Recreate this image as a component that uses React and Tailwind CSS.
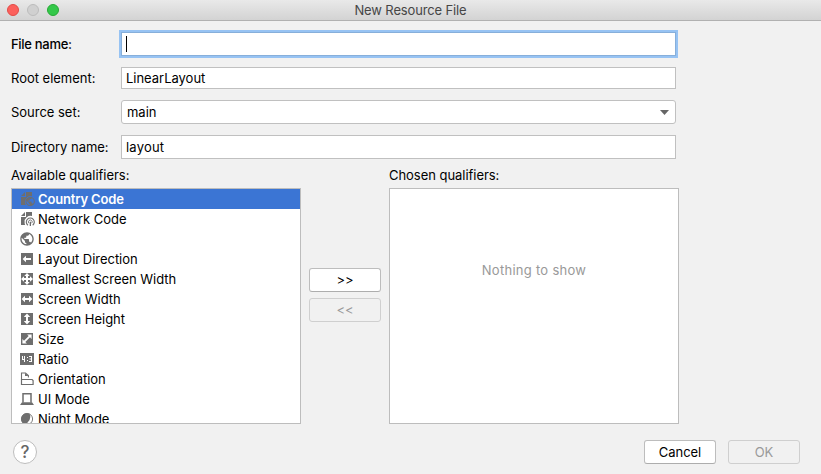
import React from "react";

const GRAY = "#6e6e6e";

function Icon({ children }) {
  return (
    <svg width="16" height="16" viewBox="0 0 16 16" fill={GRAY} className="block shrink-0">
      {children}
    </svg>
  );
}

function Square({ children }) {
  return (
    <Icon>
      <rect x="2" y="2" width="12" height="12" />
      <g fill="#fff">{children}</g>
    </Icon>
  );
}

const globe =
  "M12 2C6.48 2 2 6.48 2 12s4.48 10 10 10 10-4.48 10-10S17.52 2 12 2zm-1 17.93c-3.95-.49-7-3.85-7-7.93 0-.62.08-1.21.21-1.79L9 15v1c0 1.1.9 2 2 2v1.93zm6.9-2.54c-.26-.81-1-1.39-1.9-1.39h-1v-3c0-.55-.45-1-1-1H8v-2h2c.55 0 1-.45 1-1V7h2c1.1 0 2-.9 2-2v-.41c2.93 1.19 5 4.06 5 7.41 0 2.08-.8 3.97-2.1 5.39z";

const qualifiers = [
  {
    name: "Country Code",
    icon: (
      <Icon>
        <path d="M7 1h6v4.2a5.6 5.6 0 0 0-7 5.6q0 1.8.8 3.2H2V6h5z" />
        <path d="M2 5 6 1v4z" />
        <path transform="translate(5.7 5) scale(.46)" d={globe} />
      </Icon>
    ),
  },
  {
    name: "Network Code",
    icon: (
      <Icon>
        <path d="M7 1h6v4a6 6 0 0 0-7.4 6.3q0 1.5.5 2.7H2V6h5z" />
        <path d="M2 5 6 1v4z" />
        <path d="M8.9 14.2a4 4 0 1 1 4.8 0" fill="none" stroke={GRAY} strokeWidth="1.1" />
        <path d="M9.9 12.2a1.9 1.9 0 1 1 2.8 0" fill="none" stroke={GRAY} strokeWidth=".9" />
        <path d="M10.7 10.7h1.3V15h-1.3z" />
      </Icon>
    ),
  },
  {
    name: "Locale",
    icon: (
      <Icon>
        <path transform="translate(-.1 -.1) scale(.675)" d={globe} />
      </Icon>
    ),
  },
  {
    name: "Layout Direction",
    icon: (
      <Square>
        <path d="M3.6 8 7 4.8V7h5v2H7v2.2z" />
      </Square>
    ),
  },
  {
    name: "Smallest Screen Width",
    icon: (
      <Square>
        <path d="M8 2l2.7 3H9v2h2V5.3L14 8l-3 2.7V9H9v2h1.7L8 14l-2.7-3H7V9H5v1.7L2 8l3-2.7V7h2V5H5.3z" />
      </Square>
    ),
  },
  {
    name: "Screen Width",
    icon: (
      <Square>
        <path d="M2.6 8 6 4.8V7h4V4.8L13.4 8 10 11.2V9H6v2.2z" />
      </Square>
    ),
  },
  {
    name: "Screen Height",
    icon: (
      <Square>
        <path d="M8 2.6 11.2 6H9v4h2.2L8 13.4 4.8 10H7V6H4.8z" />
      </Square>
    ),
  },
  {
    name: "Size",
    icon: (
      <Square>
        <path d="M12.6 3.4v4.5L11 6.3 6.3 11l1.6 1.6H3.4V8.1L5 9.7 9.7 5 8.1 3.4z" />
      </Square>
    ),
  },
  {
    name: "Ratio",
    icon: (
      <Icon>
        <rect x="1" y="2" width="14" height="12" />
        <g fill="#fff">
          <path d="M3 5h1v3h1V5h1v6H5V9H3z" />
          <path d="M8 6h1v1H8zM8 9h1v1H8z" />
          <path d="M10 5h3v6h-3v-1h2V8.5h-1.5v-1H12V6h-2z" />
        </g>
      </Icon>
    ),
  },
  {
    name: "Orientation",
    icon: (
      <Icon>
        <path d="M2.5 8V2h4l2.9 2.6V6.5" fill="none" stroke={GRAY} strokeWidth="1.1" />
        <path d="M6 2v3h3.8z" />
        <path
          d="M2.5 8.5h10.6l1 1v4H2.5z"
          fill="none"
          stroke={GRAY}
          strokeWidth="1.2"
        />
      </Icon>
    ),
  },
  {
    name: "UI Mode",
    icon: (
      <Icon>
        <path d="M4 11.6V2.7h8v8.9" fill="none" stroke={GRAY} strokeWidth="1.5" />
        <path d="M3 11.2h10l2 2.8H1z" />
      </Icon>
    ),
  },
  {
    name: "Night Mode",
    icon: (
      <Icon>
        <circle cx="8" cy="8" r="5.6" fill="#fff" stroke={GRAY} strokeWidth=".9" />
        <path d="M2.2 8A5.8 5.8 0 0 1 10.6 2.8Q13.2 9 6.2 13.5A5.8 5.8 0 0 1 2.2 8z" />
      </Icon>
    ),
  },
];

function Label({ children, className = "" }) {
  return <div className={`w-[110px] shrink-0 ${className}`}>{children}</div>;
}

function Button({ children, disabled = false }) {
  return (
    <button
      disabled={disabled}
      className={`flex h-6 w-[72px] items-center justify-center rounded-[3px] border ${
        disabled
          ? "border-[#cfcfcf] bg-[#f1f1f1] text-[#9a9a9a]"
          : "border-[#bdbdbd] border-b-[#adadad] bg-white text-black"
      }`}
    >
      {children}
    </button>
  );
}

export default function App() {
  return (
    <div className="flex h-[474px] w-[821px] flex-col overflow-hidden bg-[#f1f1f1] font-['Inter','Liberation_Sans',sans-serif] text-[13px] leading-5 tracking-[-0.02px] text-black">
      <header className="flex h-[21px] shrink-0 items-center border-b border-[#b1b1b1] bg-linear-to-b from-[#e9e9e9] to-[#d3d3d3] px-[7px]">
        <div className="flex w-[100px] gap-2">
          <span className="size-3 rounded-full border border-[#e24b47] bg-[#fc605c]" />
          <span className="size-3 rounded-full border border-[#bcbcbc] bg-[#d0d0d0]" />
          <span className="size-3 rounded-full border border-[#27aa35] bg-[#34c84a]" />
        </div>
        <h1 className="flex-1 text-center tracking-[-0.14px] text-[#464646]">New Resource File</h1>
        <div className="w-[100px]" />
      </header>

      <main className="flex flex-col pl-[11px] pt-[11px]">
        <div className="flex h-6 items-center">
          <Label className="font-medium tracking-[-0.3px]">File name:</Label>
          <div className="flex h-6 w-[555px] items-center border border-[#87afda] bg-white pl-1 ring-2 ring-[#97c3f3]">
            <span className="h-4 w-px bg-black" />
          </div>
        </div>
        <div className="mt-[11px] flex h-[22px] items-center">
          <Label>Root element:</Label>
          <div className="flex h-[22px] w-[555px] items-center border border-[#c0c0c0] bg-white pl-1">
            LinearLayout
          </div>
        </div>
        <div className="mt-[11px] flex h-6 items-center">
          <Label>Source set:</Label>
          <div className="flex h-6 w-[555px] items-center justify-between rounded-[3px] border border-[#c0c0c0] bg-white pl-[5px] pr-[6px]">
            main
            <svg width="9" height="5" viewBox="0 0 9 5" fill="#666">
              <path d="M0 0h9L4.5 5z" />
            </svg>
          </div>
        </div>
        <div className="mt-[11px] flex h-6 items-center">
          <Label>Directory name:</Label>
          <div className="flex h-6 w-[555px] items-center border border-[#c0c0c0] bg-white pl-1 tracking-[0.2px]">
            layout
          </div>
        </div>

        <div className="mt-[6px] flex">
          <section className="w-[290px]">
            <h2 className="h-[23px]">Available qualifiers:</h2>
            <ul className="h-[236px] overflow-hidden border border-[#bdbdbd] bg-white">
              {qualifiers.map((q, i) => (
                <li
                  key={q.name}
                  className={`flex h-5 items-center gap-[3px] pl-[7px] ${
                    i === 0 ? "bg-[#3b75d4] font-semibold tracking-[-0.15px] text-white" : ""
                  }`}
                >
                  {q.icon}
                  <span>{q.name}</span>
                </li>
              ))}
            </ul>
          </section>
          <div className="flex w-[88px] flex-col items-center gap-[6px] pt-[103px]">
            <Button>&gt;&gt;</Button>
            <Button disabled>&lt;&lt;</Button>
          </div>
          <section className="w-[290px]">
            <h2 className="h-[23px] tracking-[-0.04px]">Chosen qualifiers:</h2>
            <div className="h-[236px] border border-[#bdbdbd] bg-white pt-[71px] text-center tracking-[0.28px] text-[#999]">
              Nothing to show
            </div>
          </section>
        </div>
      </main>

      <footer className="mt-4 flex h-6 items-center justify-between pl-[13px] pr-[21px]">
        <button className="flex size-6 items-center justify-center rounded-full border border-[#bdbdbd] bg-white text-[17px] font-medium text-[#666]">
          ?
        </button>
        <div className="flex gap-3">
          <Button>Cancel</Button>
          <Button disabled>OK</Button>
        </div>
      </footer>
    </div>
  );
}
